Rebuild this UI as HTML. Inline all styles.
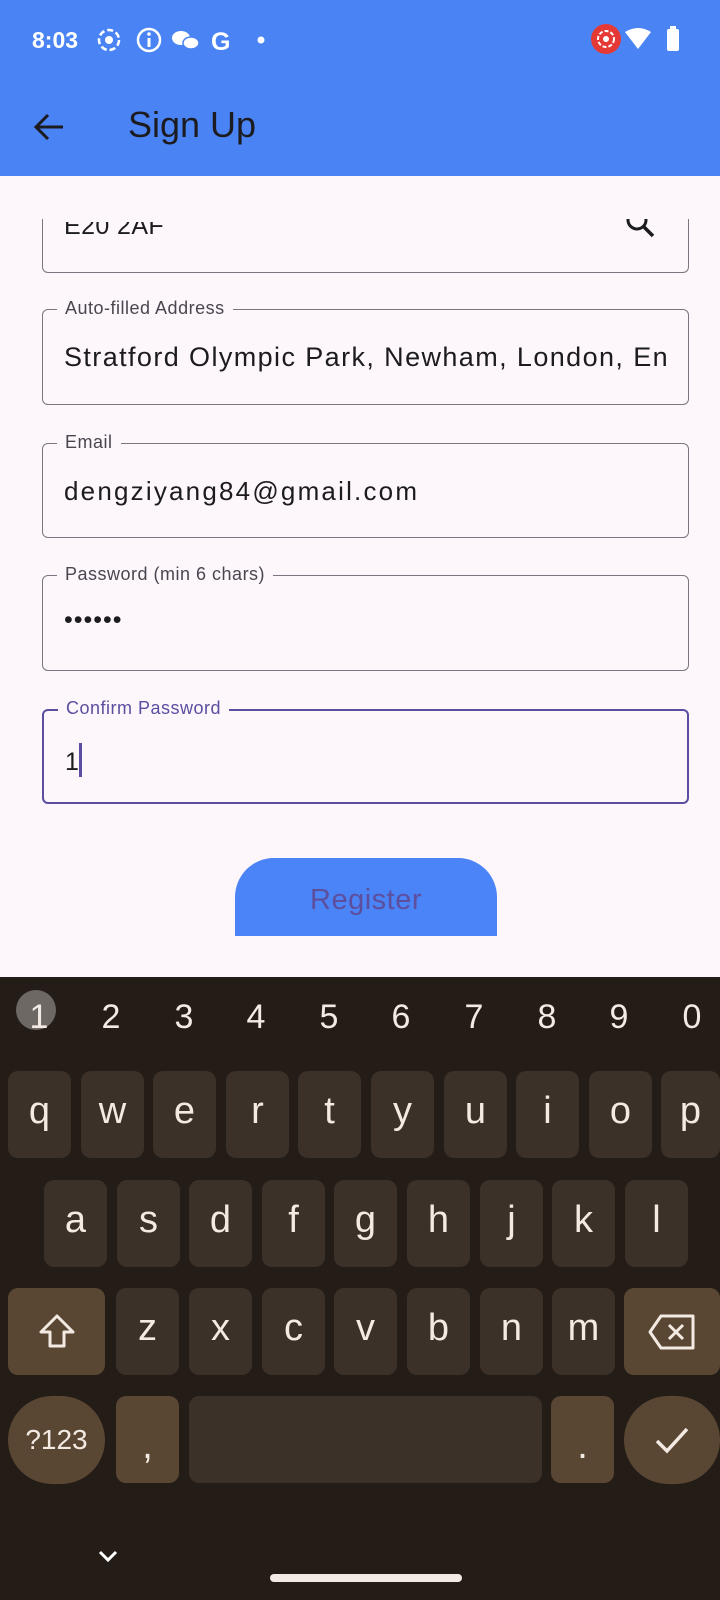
<!DOCTYPE html>
<html><head><meta charset="utf-8"><style>
*{margin:0;padding:0;box-sizing:border-box}
body{width:720px;height:1600px;overflow:hidden;background:#fdf7fc;font-family:"Liberation Sans",sans-serif;position:relative}
.abs{position:absolute}
.bar{left:0;top:0;width:720px;height:176px;background:#4a84f4}
.field{position:absolute;left:42px;width:647px;border:1.5px solid #7a7580;border-radius:6px;background:#fdf7fc}
.lbl{position:absolute;left:14px;top:-12px;padding:0 8px;background:#fdf7fc;font-size:18px;color:#4a4650;letter-spacing:.5px}
.val{position:absolute;left:21px;font-size:25px;color:#1c1b1f;white-space:nowrap;overflow:hidden;letter-spacing:.4px}
.kb{left:0;top:977px;width:720px;height:623px;background:#241c17}
.key{position:absolute;width:63px;height:87px;background:#3b3129;border-radius:10px;color:#f3ebe3;font-size:38px;text-align:center;line-height:80px}
.sp{background:#5a4733}
.num{position:absolute;top:998px;color:#f3ebe3;font-size:34px;width:40px;text-align:center}
</style></head><body>
<div class="abs bar"></div>
<div class="abs" style="left:32px;top:27px;color:#fff;font-size:23px;font-weight:bold">8:03</div>
<svg class="abs" style="left:96px;top:27px" width="180" height="28">
<circle cx="13" cy="13" r="10" fill="none" stroke="#fff" stroke-width="2.5" stroke-dasharray="6 3"/><circle cx="13" cy="13" r="4" fill="#fff"/>
<circle cx="53" cy="13" r="11" fill="none" stroke="#fff" stroke-width="2.5"/><rect x="51.5" y="11" width="3" height="9" fill="#fff"/><circle cx="53" cy="7" r="1.8" fill="#fff"/>
<ellipse cx="85" cy="11" rx="9" ry="7" fill="#fff"/><ellipse cx="95" cy="16" rx="8" ry="6" fill="#fff" stroke="#4a84f4" stroke-width="1.5"/>
<text x="115" y="23" fill="#fff" font-size="25" font-weight="bold" font-family="Liberation Sans">G</text>
<circle cx="165" cy="13" r="3.5" fill="#fff"/></svg>
<svg class="abs" style="left:590px;top:24px" width="100" height="30">
<circle cx="16" cy="15" r="15" fill="#e53935"/><circle cx="16" cy="15" r="8" fill="none" stroke="#fff" stroke-width="2" stroke-dasharray="4 2"/><circle cx="16" cy="15" r="3" fill="#fff"/>
<path d="M35 8 Q48 0 61 8 L48 25 Z" fill="#fff"/>
<rect x="77" y="5" width="12" height="22" rx="2" fill="#fff"/><rect x="80" y="2" width="6" height="4" fill="#fff"/></svg>
<svg class="abs" style="left:33px;top:113px" width="32" height="28"><path d="M30 14H4M15 2L3 14l12 12" fill="none" stroke="#1c1b1f" stroke-width="3"/></svg>
<div class="abs" style="left:128px;top:104px;font-size:36px;color:#1c1b1f">Sign Up</div>

<div class="field" style="top:200px;height:73px;border-top:none"><div class="val" style="top:12px;clip-path:inset(10px 0 0 0)">E20 2AF</div>
<svg class="abs" style="left:583px;top:14px" width="30" height="30"><circle cx="11" cy="6" r="9" fill="none" stroke="#1c1b1f" stroke-width="3"/><path d="M17 12l10 10" stroke="#1c1b1f" stroke-width="3.5"/></svg></div>
<div class="abs" style="left:0;top:177px;width:720px;height:42px;background:#fdf7fc"></div>

<div class="field" style="top:309px;height:96px"><div class="lbl">Auto-filled Address</div><div class="val" style="top:32px;width:605px;font-size:27px;letter-spacing:1.4px">Stratford Olympic Park, Newham, London, England</div></div>
<div class="field" style="top:443px;height:95px"><div class="lbl">Email</div><div class="val" style="top:32px;letter-spacing:2.2px;font-size:26px">dengziyang84@gmail.com</div></div>
<div class="field" style="top:575px;height:96px"><div class="lbl">Password (min 6 chars)</div><div class="val" style="top:30px;letter-spacing:1px">••••••</div></div>
<div class="field" style="top:709px;height:95px;border:2.5px solid #5b4ea0"><div class="lbl" style="color:#5b4ea0;top:-13px">Confirm Password</div><div class="val" style="top:32px">1<span style="display:inline-block;width:3px;height:34px;background:#5b4ea0;vertical-align:-7px"></span></div></div>

<div class="abs" style="left:235px;top:858px;width:262px;height:78px;background:#4a84f7;border-radius:39px 39px 0 0/39px 39px 0 0;overflow:hidden"><div style="position:absolute;width:100%;text-align:center;top:26px;font-size:29px;color:#5d4e9e;letter-spacing:.5px">Register</div></div>

<div class="abs kb"></div>
<div class="abs" style="left:16px;top:990px;width:40px;height:40px;border-radius:20px;background:#6e6864"></div>
<div class="num" style="left:19px">1</div><div class="num" style="left:91px">2</div><div class="num" style="left:164px">3</div><div class="num" style="left:236px">4</div><div class="num" style="left:309px">5</div><div class="num" style="left:381px">6</div><div class="num" style="left:454px">7</div><div class="num" style="left:527px">8</div><div class="num" style="left:599px">9</div><div class="num" style="left:672px">0</div>

<div class="key" style="left:8px;top:1071px">q</div><div class="key" style="left:81px;top:1071px">w</div><div class="key" style="left:153px;top:1071px">e</div><div class="key" style="left:226px;top:1071px">r</div><div class="key" style="left:298px;top:1071px">t</div><div class="key" style="left:371px;top:1071px">y</div><div class="key" style="left:444px;top:1071px">u</div><div class="key" style="left:516px;top:1071px">i</div><div class="key" style="left:589px;top:1071px">o</div><div class="key" style="left:661px;top:1071px;width:59px">p</div>

<div class="key" style="left:44px;top:1180px">a</div><div class="key" style="left:117px;top:1180px">s</div><div class="key" style="left:189px;top:1180px">d</div><div class="key" style="left:262px;top:1180px">f</div><div class="key" style="left:334px;top:1180px">g</div><div class="key" style="left:407px;top:1180px">h</div><div class="key" style="left:480px;top:1180px">j</div><div class="key" style="left:552px;top:1180px">k</div><div class="key" style="left:625px;top:1180px">l</div>

<div class="key sp" style="left:8px;top:1288px;width:97px"><svg width="40" height="40" style="margin-top:24px"><path d="M20 4L4 20h9v14h14V20h9Z" fill="none" stroke="#f3ebe3" stroke-width="3" stroke-linejoin="round"/></svg></div>
<div class="key" style="left:116px;top:1288px">z</div><div class="key" style="left:189px;top:1288px">x</div><div class="key" style="left:262px;top:1288px">c</div><div class="key" style="left:334px;top:1288px">v</div><div class="key" style="left:407px;top:1288px">b</div><div class="key" style="left:480px;top:1288px">n</div><div class="key" style="left:552px;top:1288px">m</div>
<div class="key sp" style="left:624px;top:1288px;width:96px"><svg width="50" height="40" style="margin-top:24px"><path d="M14 4h32v32H14L3 20Z" fill="none" stroke="#f3ebe3" stroke-width="3" stroke-linejoin="round"/><path d="M22 13l14 14M36 13L22 27" stroke="#f3ebe3" stroke-width="3"/></svg></div>

<div class="key sp" style="left:8px;top:1396px;width:97px;height:88px;border-radius:44px;font-size:28px;line-height:88px">?123</div>
<div class="key sp" style="left:116px;top:1396px;line-height:100px">,</div>
<div class="key" style="left:189px;top:1396px;width:353px"></div>
<div class="key sp" style="left:551px;top:1396px;line-height:100px">.</div>
<div class="key sp" style="left:624px;top:1396px;width:96px;height:88px;border-radius:44px"><svg width="40" height="40" style="margin-top:24px"><path d="M5 21l10 10L35 9" fill="none" stroke="#f3ebe3" stroke-width="3.5"/></svg></div>

<svg class="abs" style="left:97px;top:1548px" width="22" height="16"><path d="M3 4l8 8 8-8" fill="none" stroke="#fff" stroke-width="3"/></svg>
<div class="abs" style="left:270px;top:1574px;width:192px;height:8px;border-radius:4px;background:#f3ebe3"></div>
</body></html>
